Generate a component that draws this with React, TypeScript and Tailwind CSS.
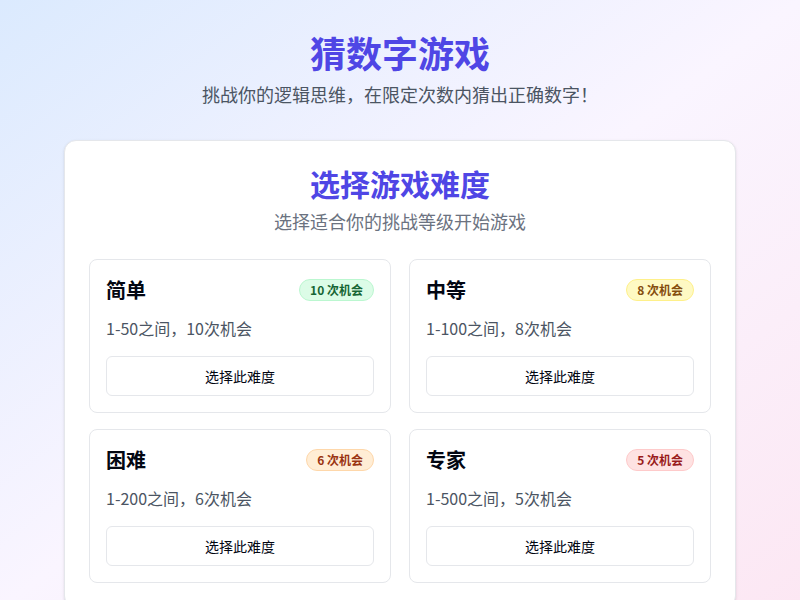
import React from 'react';

const levels = [
  { name: '简单', badge: '10 次机会', desc: '1-50之间，10次机会', tone: 'bg-[#dcfce7] text-[#166534] border-[#bbf7d0]' },
  { name: '中等', badge: '8 次机会', desc: '1-100之间，8次机会', tone: 'bg-[#fef9c3] text-[#854d0e] border-[#fef08a]' },
  { name: '困难', badge: '6 次机会', desc: '1-200之间，6次机会', tone: 'bg-[#ffedd5] text-[#9a3412] border-[#fed7aa]' },
  { name: '专家', badge: '5 次机会', desc: '1-500之间，5次机会', tone: 'bg-[#fee2e2] text-[#991b1b] border-[#fecaca]' },
];

const App: React.FC = () => {
  return (
    <div
      className="min-h-screen bg-gradient-to-br from-[#dbeafe] via-[#faf5ff] to-[#fce7f3] px-4 pt-8"
      style={{ fontFamily: '"Noto Sans CJK SC", "Noto Sans", sans-serif' }}
    >
      {/* 头部 */}
      <div className="text-center mb-8">
        <h1 className="text-4xl font-bold text-[#4f46e5]">猜数字游戏</h1>
        <p className="mt-2 text-lg text-[#4b5563]">挑战你的逻辑思维，在限定次数内猜出正确数字！</p>
      </div>

      {/* 难度选择 */}
      <div className="max-w-2xl mx-auto bg-white rounded-xl border border-[#e5e7eb] shadow-sm p-6">
        <div className="text-center mb-6">
          <h2 className="text-3xl font-bold text-[#4f46e5]">选择游戏难度</h2>
          <p className="mt-1.5 text-lg text-[#6b7280]">选择适合你的挑战等级开始游戏</p>
        </div>
        <div className="grid grid-cols-2 gap-x-[18px] gap-y-4">
          {levels.map((l) => (
            <div key={l.name} className="border border-[#e5e7eb] rounded-lg p-4">
              <div className="flex items-center justify-between mb-3 h-7">
                <h3 className="text-xl font-bold text-[#030712]">{l.name}</h3>
                <span className={`rounded-full border px-2.5 py-0.5 text-xs font-semibold ${l.tone}`}>{l.badge}</span>
              </div>
              <p className="text-base text-[#4b5563]">{l.desc}</p>
              <button className="mt-4 w-full h-10 rounded-md border border-[#e5e7eb] bg-white text-sm text-[#030712]">
                选择此难度
              </button>
            </div>
          ))}
        </div>
      </div>
    </div>
  );
};

export default App;
